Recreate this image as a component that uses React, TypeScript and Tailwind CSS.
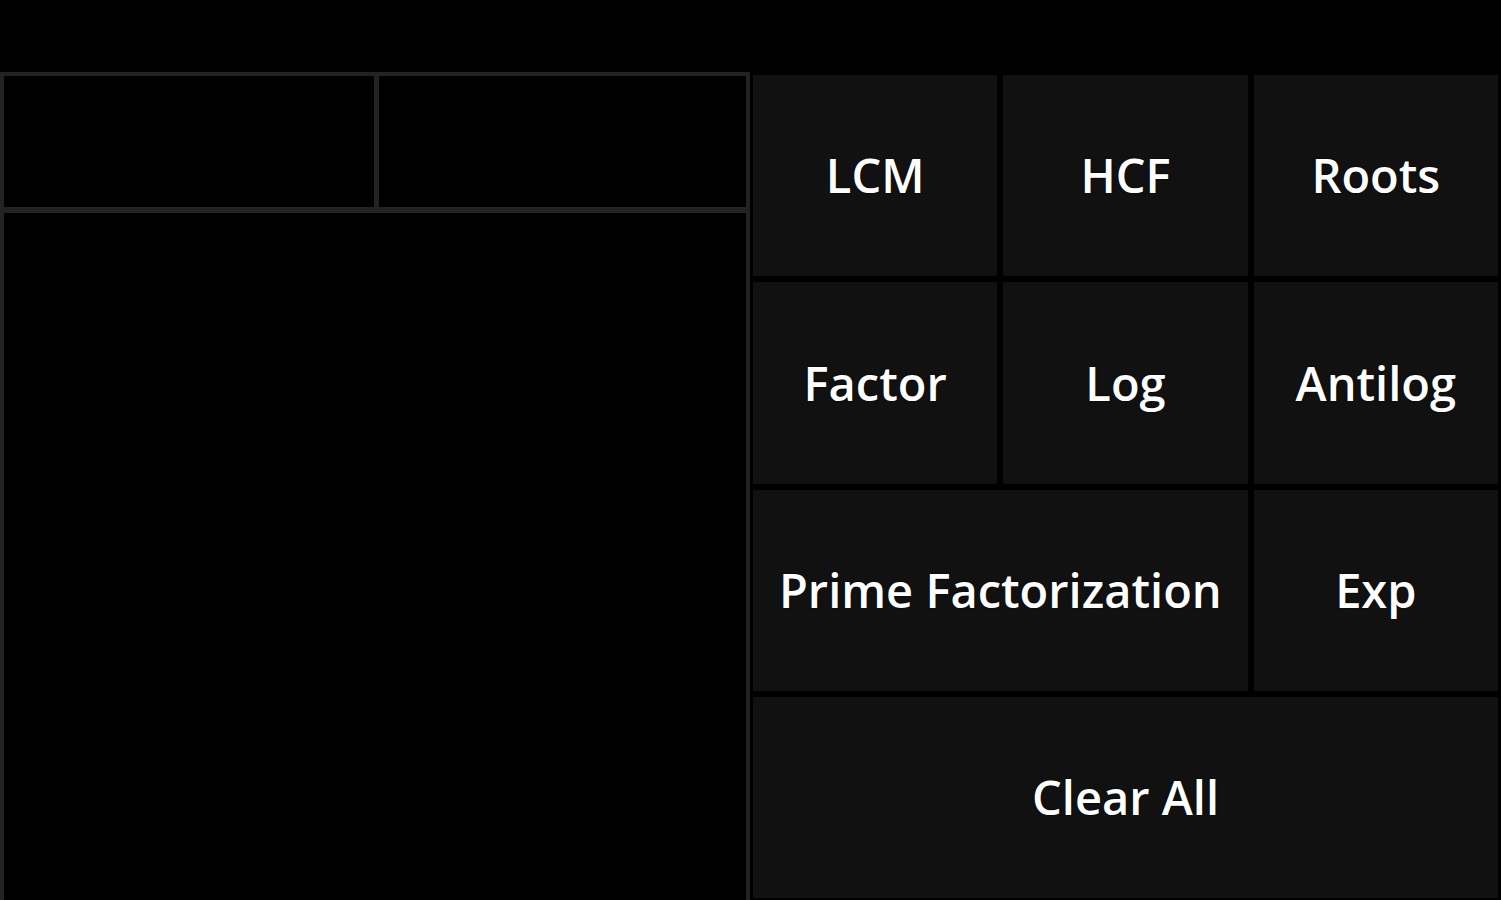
const buttons = [
  { label: "LCM", span: "" },
  { label: "HCF", span: "" },
  { label: "Roots", span: "" },
  { label: "Factor", span: "" },
  { label: "Log", span: "" },
  { label: "Antilog", span: "" },
  { label: "Prime Factorization", span: "col-span-2" },
  { label: "Exp", span: "" },
  { label: "Clear All", span: "col-span-3" },
]

export default function App() {
  return (
    <div
      className="w-[1501px] h-[900px] bg-black flex flex-col overflow-hidden"
      style={{ fontFamily: "'Open Sans', Roboto, sans-serif" }}
    >
      <div className="h-[72px] shrink-0" />
      <div className="flex flex-1 min-h-0">
        {/* input / output panel */}
        <div className="w-[750px] shrink-0 border-[4px] border-b-0 border-[#232323] flex flex-col">
          <div className="h-[137px] shrink-0 flex border-b-[6px] border-[#232323]">
            <div className="w-[375px] border-r-[5px] border-[#232323]" />
            <div className="flex-1" />
          </div>
          <div className="flex-1" />
        </div>

        {/* function keys */}
        <div className="flex-1 grid grid-cols-3 grid-rows-4 gap-x-[6px] gap-y-[6px] pl-[3px] pr-[3px] pt-[3px] pb-[2px]">
          {buttons.map((b) => (
            <button
              key={b.label}
              className={`${b.span} bg-[#111111] flex items-center justify-center text-white text-[47px] font-semibold`}
              style={{ textShadow: "0 0 2px rgba(0,0,0,0.9)" }}
            >
              {b.label}
            </button>
          ))}
        </div>
      </div>
    </div>
  )
}
